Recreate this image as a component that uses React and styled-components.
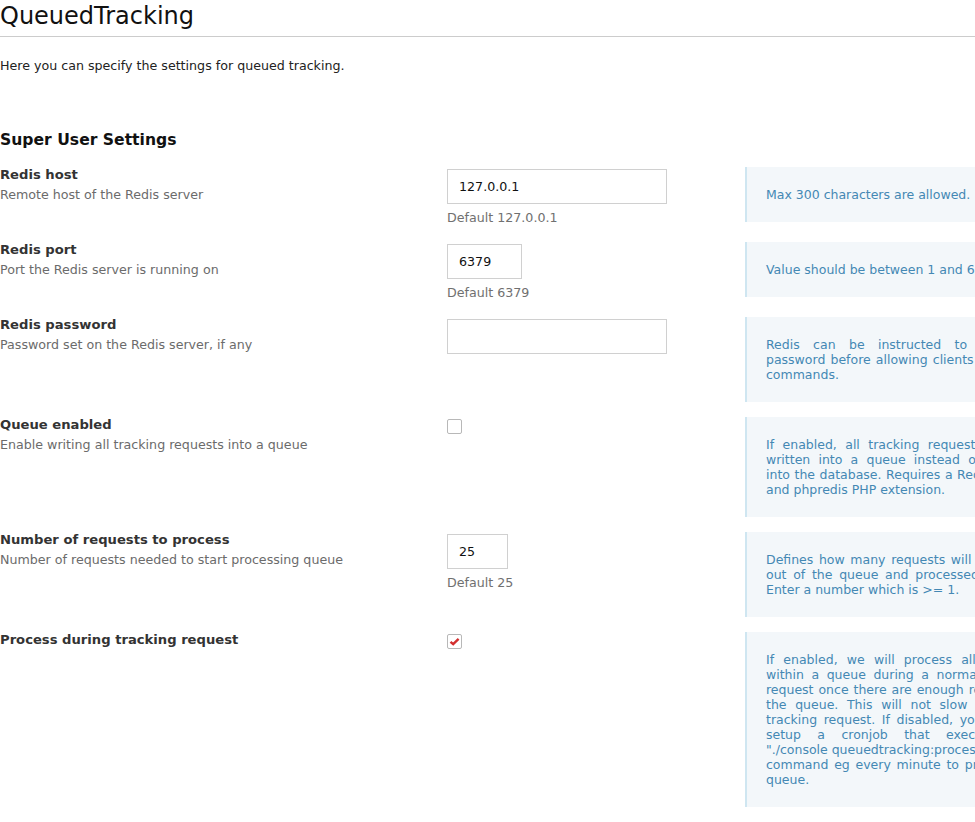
import React from "react";
import styled, { createGlobalStyle } from "styled-components";

const Global = createGlobalStyle`
  html, body { margin: 0; padding: 0; overflow: hidden; background: #fff; }
  body { font-family: "DejaVu Sans", Verdana, sans-serif; color: #212121; }
`;

const Page = styled.div`
  width: 1100px;
`;

const Title = styled.h2`
  margin: 0;
  font-size: 24px;
  font-weight: normal;
  line-height: 32px;
  padding-bottom: 4px;
  border-bottom: 1px solid #ccc;
  color: #111;
`;

const Intro = styled.p`
  margin: 20px 0 0;
  font-size: 12.65px;
  line-height: 18px;
  color: #222;
`;

const Section = styled.h3`
  margin: 53px 0 15px;
  font-size: 15.6px;
  font-weight: bold;
  line-height: 24px;
  color: #111;
`;

const Row = styled.div`
  display: grid;
  grid-template-columns: 447px 298px auto;
  align-items: start;
  margin-bottom: 15px;
`;

const LabelCol = styled.div`
  display: flex;
  flex-direction: column;
  gap: 4px;
`;

const Label = styled.div`
  font-size: 13.15px;
  font-weight: bold;
  line-height: 16px;
  color: #333;
`;

const Desc = styled.div`
  font-size: 12.65px;
  line-height: 16px;
  color: #6b6b6b;
`;

const FieldCol = styled.div`
  display: flex;
  flex-direction: column;
  align-items: flex-start;
  padding-top: 2px;
`;

const TextInput = styled.div`
  box-sizing: border-box;
  width: ${(p) => p.$w}px;
  height: 35px;
  border: 1px solid #d0d0d0;
  padding: 0 11px;
  font-size: 12.65px;
  line-height: 33px;
  color: #111;
`;

const DefaultText = styled.div`
  margin-top: 5px;
  font-size: 12.65px;
  line-height: 18px;
  color: #707070;
`;

const Checkbox = styled.div`
  box-sizing: border-box;
  width: 15px;
  height: 15px;
  border: 1px solid #b8b8b8;
  border-radius: 2px;
  background: #fff;
  display: flex;
  align-items: center;
  justify-content: center;
`;

const Help = styled.div`
  width: ${(p) => p.$w || 273}px;
  background: #f3f7fa;
  border-left: 2px solid #cfe6f1;
  padding: 20px 20px 20px 19px;
  font-size: 12.5px;
  line-height: 15px;
  color: #4488b4;
  text-align: justify;
`;

const Command = styled.span`
  display: inline-block;
  white-space: nowrap;
`;

const fields = [
  {
    label: "Redis host",
    desc: "Remote host of the Redis server",
    input: "127.0.0.1",
    w: 220,
    def: "Default 127.0.0.1",
    help: "Max 300 characters are allowed.",
  },
  {
    label: "Redis port",
    desc: "Port the Redis server is running on",
    input: "6379",
    w: 75,
    def: "Default 6379",
    help: "Value should be between 1 and 65535.",
  },
  {
    label: "Redis password",
    desc: "Password set on the Redis server, if any",
    input: "",
    w: 220,
    helpW: 280,
    help: "Redis can be instructed to require a password before allowing clients to execute commands.",
  },
  {
    label: "Queue enabled",
    desc: "Enable writing all tracking requests into a queue",
    checkbox: true,
    checked: false,
    helpW: 269,
    help: "If enabled, all tracking requests will be written into a queue instead of directly into the database. Requires a Redis server and phpredis PHP extension.",
  },
  {
    label: "Number of requests to process",
    desc: "Number of requests needed to start processing queue",
    input: "25",
    w: 61,
    def: "Default 25",
    help: "Defines how many requests will be picked out of the queue and processed at once. Enter a number which is >= 1.",
  },
  {
    label: "Process during tracking request",
    checkbox: true,
    checked: true,
    help: (
      <>
        If enabled, we will process all requests within a queue during a normal tracking request once there are
        enough requests in the queue. This will not slow down the tracking request. If disabled, you have to setup a
        cronjob that executes the <Command>"./console queuedtracking:process"</Command> command eg every minute to
        process the queue.
      </>
    ),
  },
];

const Check = () => (
  <svg width="11" height="9" viewBox="0 0 11 9">
    <path d="M1.5 4.8 L4.2 7.2 L9.6 1.8" fill="none" stroke="#d32f2f" strokeWidth="2.4" />
  </svg>
);

export default function App() {
  return (
    <Page>
      <Global />
      <Title>QueuedTracking</Title>
      <Intro>Here you can specify the settings for queued tracking.</Intro>
      <Section>Super User Settings</Section>
      {fields.map((f) => (
        <Row key={f.label}>
          <LabelCol>
            <Label>{f.label}</Label>
            {f.desc && <Desc>{f.desc}</Desc>}
          </LabelCol>
          <FieldCol>
            {f.checkbox ? (
              <Checkbox>{f.checked && <Check />}</Checkbox>
            ) : (
              <TextInput $w={f.w}>{f.input}</TextInput>
            )}
            {f.def && <DefaultText>{f.def}</DefaultText>}
          </FieldCol>
          <Help $w={f.helpW}>{f.help}</Help>
        </Row>
      ))}
    </Page>
  );
}
